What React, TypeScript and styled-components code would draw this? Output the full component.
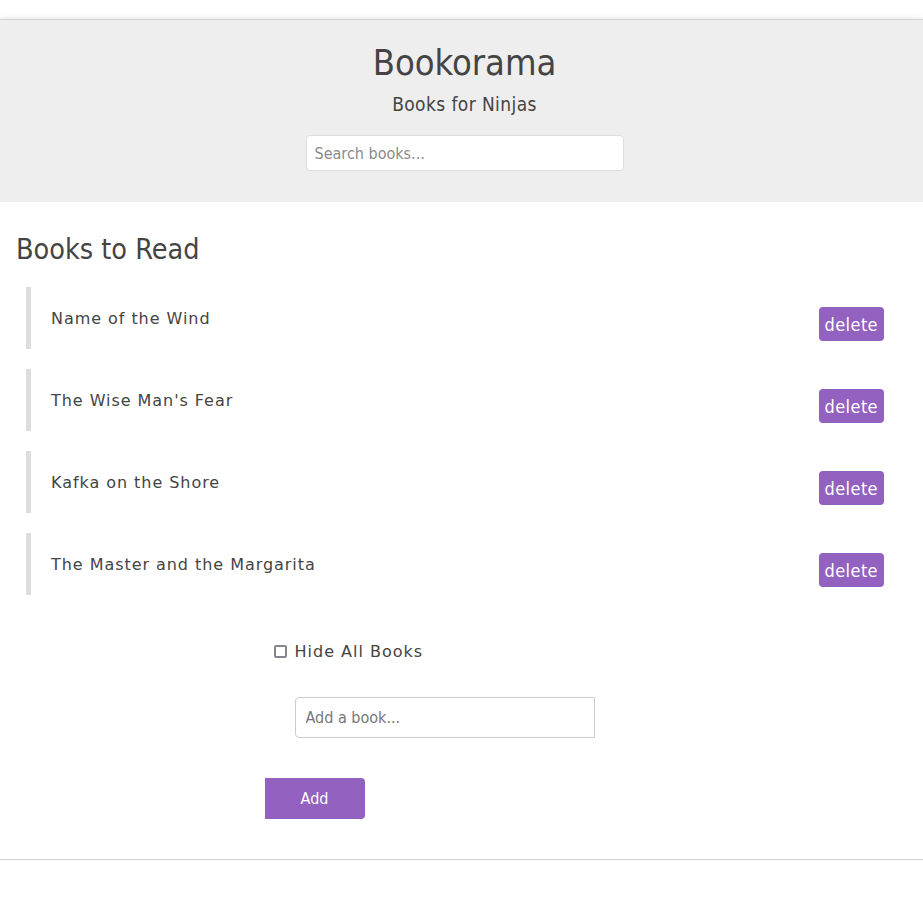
import React, { useState } from "react";
import styled, { createGlobalStyle } from "styled-components";

const GlobalStyle = createGlobalStyle`
  body {
    margin: 0;
    background: #fff;
    color: #444;
    font-family: "DejaVu Sans Condensed", "DejaVu Sans", Tahoma, sans-serif;
  }
`;

const initialBooks = [
  "Name of the Wind",
  "The Wise Man's Fear",
  "Kafka on the Shore",
  "The Master and the Margarita",
];

const App: React.FC = () => {
  const [books, setBooks] = useState<string[]>(initialBooks);
  const [hidden, setHidden] = useState<boolean>(false);
  const [search, setSearch] = useState<string>("");
  const [newBook, setNewBook] = useState<string>("");

  function handleAdd(event: React.FormEvent<HTMLFormElement>) {
    event.preventDefault();
    if (!newBook.trim()) return;
    setBooks([...books, newBook.trim()]);
    setNewBook("");
  }

  const shown = books.filter((b) =>
    b.toLowerCase().includes(search.toLowerCase())
  );

  return (
    <>
      <GlobalStyle />
      <Wrapper>
        <Banner>
          <Title>Bookorama</Title>
          <Subtitle>Books for Ninjas</Subtitle>
          <SearchInput
            type="text"
            placeholder="Search books..."
            value={search}
            onChange={(e) => setSearch(e.target.value)}
          />
        </Banner>

        <BookList>
          <Heading>Books to Read</Heading>
          {!hidden && (
            <List>
              {shown.map((book) => (
                <Item key={book}>
                  <Name>{book}</Name>
                  <DeleteButton
                    onClick={() => setBooks(books.filter((b) => b !== book))}
                  >
                    delete
                  </DeleteButton>
                </Item>
              ))}
            </List>
          )}
        </BookList>

        <AddForm onSubmit={handleAdd}>
          <HideRow>
            <Checkbox
              type="checkbox"
              id="hide"
              checked={hidden}
              onChange={(e) => setHidden(e.target.checked)}
            />
            <HideLabel htmlFor="hide">Hide All Books</HideLabel>
          </HideRow>
          <AddInput
            type="text"
            placeholder="Add a book..."
            value={newBook}
            onChange={(e) => setNewBook(e.target.value)}
          />
          <AddButton type="submit">Add</AddButton>
        </AddForm>
      </Wrapper>
    </>
  );
};

export default App;

const Wrapper = styled.div`
  margin: 19px 0 0;
  border-top: 1px solid lightgray;
  border-bottom: 1px solid lightgray;
  box-shadow: 0px 1px 6px rgba(0, 0, 0, 0.2);
  padding: 0 0 40px;
  background: #fff;
`;

// Banner

const Banner = styled.header`
  background: #eee;
  padding: 20px 0 31px 6px;
  display: flex;
  flex-direction: column;
  align-items: center;
`;

const Title = styled.h1`
  margin: 0;
  font-weight: normal;
  font-size: 36px;
  line-height: 46px;
`;

const Subtitle = styled.p`
  margin: 6px 0 0;
  font-size: 19px;
  line-height: 24px;
  letter-spacing: 0.4px;
`;

const SearchInput = styled.input`
  margin-top: 19px;
  width: 318px;
  height: 36px;
  box-sizing: border-box;
  padding: 0 8px;
  border: 1px solid #ddd;
  border-radius: 4px;
  font-family: inherit;
  font-size: 16px;
  color: #444;
  outline: none;

  &::placeholder {
    color: #8a8a8a;
  }
`;

// Book list

const BookList = styled.section`
  padding: 30px 16px 0;
`;

const Heading = styled.h2`
  margin: 0;
  font-weight: normal;
  font-size: 28.5px;
  line-height: 36px;
`;

const List = styled.ul`
  list-style-type: none;
  margin: 19px 3px 0 10px;
  padding: 0;
  display: flex;
  flex-direction: column;
  gap: 20px;
`;

const Item = styled.li`
  display: flex;
  justify-content: space-between;
  align-items: center;
  height: 62px;
  box-sizing: border-box;
  padding: 0 20px;
  border-left: 5px solid #ddd;

  &:hover {
    border-color: #9361bf;
  }
`;

const Name = styled.span`
  font-family: "DejaVu Sans", Tahoma, sans-serif;
  font-size: 16px;
  letter-spacing: 0.95px;
`;

const DeleteButton = styled.button`
  border: 0;
  background: #9361bf;
  color: white;
  border-radius: 4px;
  padding: 6px;
  height: 34px;
  margin-top: 12px;
  font-family: inherit;
  font-size: 18px;
  letter-spacing: 0.4px;
  cursor: pointer;
`;

// Add book

const AddForm = styled.form`
  width: 400px;
  margin: 47px auto 0;
  display: flex;
  flex-direction: column;
  align-items: flex-start;
`;

const HideRow = styled.div`
  display: flex;
  align-items: center;
  padding-left: 12px;
`;

const Checkbox = styled.input`
  appearance: none;
  width: 13px;
  height: 13px;
  margin: 0 8px 0 0;
  box-sizing: border-box;
  border: 2px solid #85858f;
  border-radius: 2px;
  background: #fff;

  &:checked {
    background: #9361bf;
    border-color: #9361bf;
  }
`;

const HideLabel = styled.label`
  font-family: "DejaVu Sans", Tahoma, sans-serif;
  font-size: 16px;
  letter-spacing: 1px;
`;

const AddInput = styled.input`
  margin: 36px 0 0 33px;
  width: 300px;
  height: 41px;
  box-sizing: border-box;
  padding: 10px;
  border: 1px solid #ccc;
  border-radius: 4px 0 0 4px;
  font-family: inherit;
  font-size: 16px;
  color: #444;
  outline: none;

  &::placeholder {
    color: #777;
  }
`;

const AddButton = styled.button`
  margin: 40px 0 0 3px;
  width: 100px;
  height: 41px;
  border: 0;
  background: #9361bf;
  color: white;
  border-radius: 0 4px 4px 0;
  font-family: inherit;
  font-size: 16px;
  cursor: pointer;
`;
